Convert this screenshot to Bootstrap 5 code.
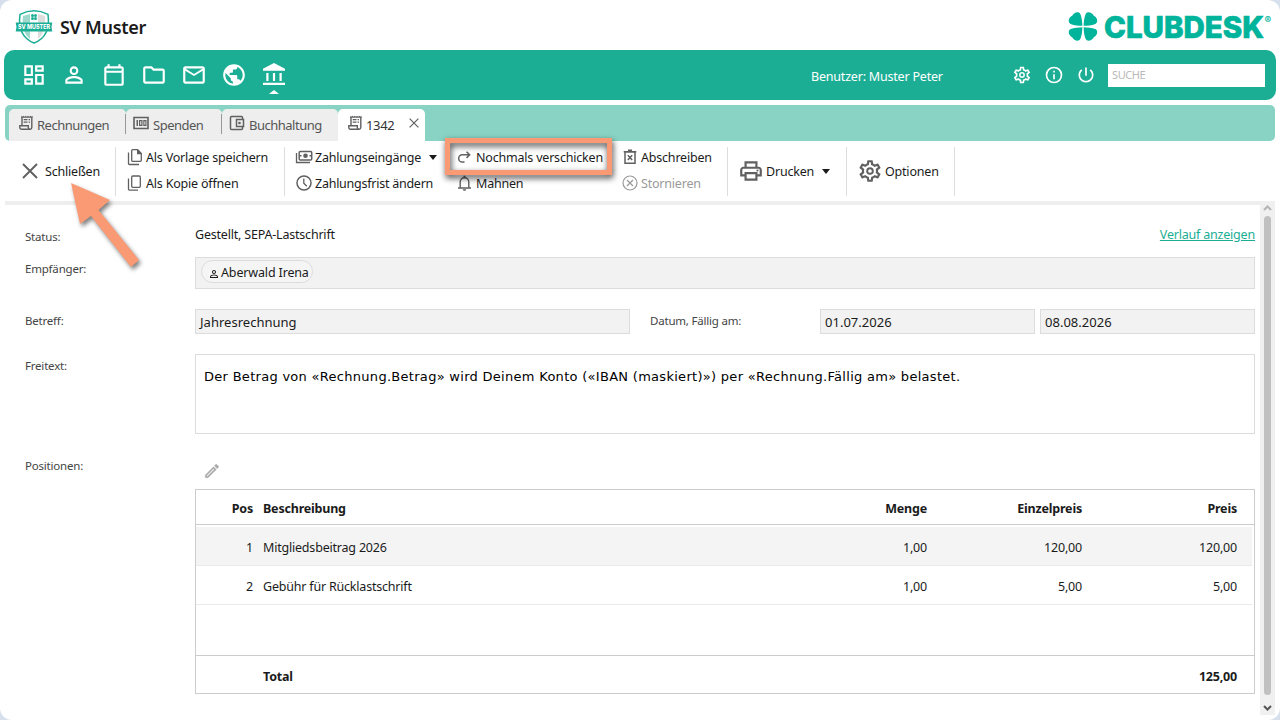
<!DOCTYPE html>
<html lang="de">
<head>
<meta charset="utf-8">
<meta name="viewport" content="width=device-width, initial-scale=1">
<title>SV Muster – Rechnung 1342</title>
<link href="https://cdn.jsdelivr.net/npm/bootstrap@5.3.0/dist/css/bootstrap.min.css" rel="stylesheet">
<style>
body{background:#d5e0ec;font-family:"Noto Sans","Open Sans",sans-serif;font-size:12.5px;letter-spacing:-.2px;color:#1b1b1b;line-height:20px;overflow:hidden}
svg{flex:none;display:block;fill:currentColor;overflow:visible}
.app{width:1280px;height:720px;background:#fff;border-radius:12px}
.brand-row{height:50px;padding:5px 6px 0 15px}
.club{font-size:18px;font-weight:600;letter-spacing:-.3px;margin:-1px 0 0 7px}
.mainbar{height:50px;margin:0 4px;background:#1cae95;border-radius:10px;color:#fff;padding:0 11px 0 17px}
.mod{width:26px;margin-right:14px}
.user{width:201px;padding-top:3px}
.find{width:157px;height:23px;font-size:11px;color:#b9b9b9;padding:0 4px;background:#fff;letter-spacing:-.4px}
.tabbar{height:36px;margin:5px 5px 0;background:#89d3c4;border-radius:5px;padding:4px 0 0 4px}
.doc-tab{height:32px;background:#eee;color:#555;border-radius:5px 5px 0 0;font-size:13px;letter-spacing:-.5px}
.doc-tab.current{background:#fff;color:#333}
.split{width:1px;height:20px;background:#999;margin-bottom:3px}
.ribbon{height:60px;margin:0 5px}
.ribbon svg,.doc-tab svg{color:#606060}
.ribbon span{padding-top:2px}
.cmd{height:26px}
.sep{width:1px;height:49px;background:#ddd;margin-top:6px}
.arrowdown{border:4px solid transparent;border-top:5px solid #1b1b1b;border-bottom:0;margin-top:1px}
.off,.ribbon .off svg{color:#999}
.pane{width:1255px;height:514px;border-top:4px solid #eee;padding:0 5px 0 20px}
.lbl{width:170px;font-size:11.5px;color:#444;flex:none}
.field{background:#f2f2f2;border:1px solid #dcdcdc;font-size:13px;padding-left:4px;height:25px;line-height:24px;letter-spacing:.02px}
.pill{height:23px;border:1px solid #dcdcdc;border-radius:12px;width:112px;padding-left:6px;margin-top:-1px;background:#f5f5f5;font-size:12.5px;letter-spacing:-.15px}
.free{height:80px;border:1px solid #dcdcdc;font-family:"DejaVu Sans",sans-serif;font-size:13px;letter-spacing:.29px;padding:12px 8px;color:#000}
.bar{width:15px;height:514px;background:#f0f0f0}
.thumb{width:7px;height:479px;background:#c0c0c0;border-radius:4px}
.grid-box{width:1060px;height:205px;border:1px solid #ccc}
.c-pos{width:57px;margin-right:10px;text-align:right}
.c-num{width:155px;text-align:right}
.item{height:39px;border-bottom:1px solid #eaeaea;margin-right:2px;padding:4px 15px 0 0}
.mark-box{left:445px;top:138px;width:167px;height:37px;border:5px solid #fa9a74;filter:drop-shadow(1px 3px 3px rgba(0,0,0,.75))}
.pointer{left:60px;top:175px;filter:drop-shadow(2px 3px 2px rgba(0,0,0,.5))}
.marker{left:265px;top:40px;width:0;border:5px solid transparent;border-bottom:4px solid #fff;border-top:0}
</style>
</head>
<body>
<svg width="0" height="0" class="position-absolute">
<symbol id="gear" viewBox="0 0 24 24"><path d="M19.43 12.98c.04-.32.07-.64.07-.98s-.03-.66-.07-.98l2.11-1.65c.19-.15.24-.42.12-.64l-2-3.46c-.09-.16-.26-.25-.44-.25-.06 0-.12.01-.17.03l-2.49 1c-.52-.4-1.08-.73-1.69-.98l-.38-2.65C14.46 2.18 14.25 2 14 2h-4c-.25 0-.46.18-.49.42l-.38 2.65c-.61.25-1.17.59-1.69.98l-2.49-1c-.06-.02-.12-.03-.18-.03-.17 0-.34.09-.43.25l-2 3.46c-.13.22-.07.49.12.64l2.11 1.65c-.04.32-.07.65-.07.98s.03.66.07.98l-2.11 1.65c-.19.15-.24.42-.12.64l2 3.46c.09.16.26.25.44.25.06 0 .12-.01.17-.03l2.49-1c.52.4 1.08.73 1.69.98l.38 2.65c.03.24.24.42.49.42h4c.25 0 .46-.18.49-.42l.38-2.65c.61-.25 1.17-.59 1.69-.98l2.49 1c.06.02.12.03.18.03.17 0 .34-.09.43-.25l2-3.46c.12-.22.07-.49-.12-.64l-2.11-1.65zm-1.98-1.71c.04.31.05.52.05.73 0 .21-.02.43-.05.73l-.14 1.13.89.7 1.08.84-.7 1.21-1.27-.51-1.04-.42-.9.68c-.43.32-.84.56-1.25.73l-1.06.43-.16 1.13-.2 1.35h-1.4l-.19-1.35-.16-1.13-1.06-.43c-.43-.18-.83-.41-1.23-.71l-.91-.7-1.06.43-1.27.51-.7-1.21 1.08-.84.89-.7-.14-1.13c-.03-.31-.05-.54-.05-.74s.02-.43.05-.73l.14-1.13-.89-.7-1.08-.84.7-1.21 1.27.51 1.04.42.9-.68c.43-.32.84-.56 1.25-.73l1.06-.43.16-1.13.2-1.35h1.39l.19 1.35.16 1.13 1.06.43c.43.18.83.41 1.23.71l.91.7 1.06-.43 1.27-.51.7 1.21-1.07.85-.89.7.14 1.13zM12 8.5a3.5 3.5 0 1 0 0 7 3.5 3.5 0 0 0 0-7zm0 5.2a1.7 1.7 0 1 1 0-3.4 1.7 1.7 0 0 1 0 3.4z"/></symbol>
<symbol id="person" viewBox="0 0 24 24"><path d="M12 5.9a2.1 2.1 0 110 4.2 2.1 2.1 0 010-4.2m0 9c2.97 0 6.1 1.46 6.1 2.1v1.1H5.9V17c0-.64 3.13-2.1 6.1-2.1M12 4C9.79 4 8 5.79 8 8s1.79 4 4 4 4-1.79 4-4-1.79-4-4-4zm0 9c-2.67 0-8 1.34-8 4v3h16v-3c0-2.66-5.33-4-8-4z"/></symbol>
<symbol id="bill" viewBox="0 0 16 16"><path d="M4 10.500V1.800M13.800 1.800v10.700a1.700 1.700 0 0 1-1.700 1.700H3.500a1.700 1.700 0 0 1-1.700-1.700v-1.800h8.500v1.800c0 1.700 1.800 1.700 1.800 1.700" fill="none" stroke="currentColor" stroke-width="1.400"/><path d="M3.300.8l1.100 1 1.100-1 1.100 1 1.150-1 1.150 1 1.150-1 1.150 1 1.100-1 1.100 1 1.100-1v2H3.300zM5.700 4h3.800v1.300H5.700zM5.700 6.500h3.800v1.300H5.700zM10.600 4h1.400v1.300h-1.400zM10.600 6.500h1.400v1.300h-1.400z"/></symbol>
<symbol id="close" viewBox="0 0 16 16"><path d="M1 1l14 14M15 1L1 15" stroke="currentColor" stroke-width="1.900" fill="none"/></symbol>
<symbol id="leaf" viewBox="-16 -16 16 16"><path d="M-.7-.7C-.8-5-1.200-9-2.700-13-4-16.200-9.500-15.500-11.300-11.300-15.500-9.500-16.200-4-13-2.700-9-1.200-5-.8-.7-.7z"/></symbol>
</svg>
<div class="app d-flex flex-column">
  <header class="brand-row d-flex align-items-center">
    <svg width="38" height="36" viewBox="0 0 38 36"><path d="M19 .8c5 0 10 1.500 14 3.500 2 15-3 24.500-14 28.700C8 28.500 3 19.300 5 4.300 9 2.300 14 .8 19 .8z" fill="#fff" stroke="#1cae95" stroke-width="1.500"/><path d="M8 6c2-.8 4.500-1.500 7-2V29C10 25 6.500 18 8 6z" fill="#9fd9ce"/><path d="M23 4c2.500.5 5 1.200 7 2 1 11.500-2 18.500-7 23z" fill="#ddd"/><g fill="#1cae95"><circle cx="17.500" cy="5.500" r="1.500"/><circle cx="20.500" cy="5.500" r="1.500"/><circle cx="17.500" cy="8.500" r="1.500"/><circle cx="20.500" cy="8.500" r="1.500"/><path d="M.7 12.500h36.600l-.8 4.500.8 4.500H.7l.8-4.500z"/></g><text x="3" y="19.200" font-family="Inter" font-weight="800" font-size="6.200" textLength="32" lengthAdjust="spacingAndGlyphs" fill="#fff" letter-spacing="0">SV MUSTER</text></svg>
    <div class="club">SV Muster</div>
    <svg class="ms-auto" width="208" height="36" viewBox="0 0 208 36" style="color:#00b39b"><g transform="translate(17 16.500)"><use href="#leaf" x="-15.200" y="-15.200" width="15.200" height="15.200"/><use href="#leaf" x="-15.200" y="-15.200" width="15.200" height="15.200" transform="rotate(90)"/><use href="#leaf" x="-15.200" y="-15.200" width="15.200" height="15.200" transform="rotate(180)"/><use href="#leaf" x="-15.200" y="-15.200" width="15.200" height="15.200" transform="rotate(270)"/></g><text x="38" y="28" font-family="Inter" font-weight="800" font-size="30" textLength="160" lengthAdjust="spacingAndGlyphs" letter-spacing="0" stroke="currentColor" stroke-width=".7">CLUBDESK</text><text x="198.500" y="14" font-family="Inter" font-weight="600" font-size="10" letter-spacing="0">®</text></svg>
  </header>
  <nav class="mainbar d-flex align-items-center position-relative">
    <svg class="mod" height="26" viewBox="0 0 24 24"><path d="M19 5v2h-4V5h4M9 5v6H5V5h4m10 8v6h-4v-6h4M9 17v2H5v-2h4M21 3h-8v6h8V3zM11 3H3v10h8V3zm10 8h-8v10h8V11zm-10 4H3v6h8v-6z"/></svg>
    <svg class="mod" height="26"><use href="#person"/></svg>
    <svg class="mod" height="26" viewBox="0 0 24 24"><path d="M19 4h-1V2h-2v2H8V2H6v2H5c-1.100 0-2 .9-2 2v14c0 1.100.9 2 2 2h14c1.100 0 2-.9 2-2V6c0-1.100-.9-2-2-2zm0 16H5V10h14v10zm0-12H5V6h14v2z"/></svg>
    <svg class="mod" height="26" viewBox="0 0 24 24"><path d="M9.170 6l2 2H20v10H4V6h5.170M10 4H4c-1.100 0-1.990.9-1.990 2L2 18c0 1.100.9 2 2 2h16c1.100 0 2-.9 2-2V8c0-1.100-.9-2-2-2h-8l-2-2z"/></svg>
    <svg class="mod" height="26" viewBox="0 0 24 24"><path d="M22 6c0-1.100-.9-2-2-2H4c-1.100 0-2 .9-2 2v12c0 1.100.9 2 2 2h16c1.100 0 2-.9 2-2V6zm-2 0l-8 5-8-5h16zm0 12H4V8l8 5 8-5v10z"/></svg>
    <svg class="mod" height="26" viewBox="0 0 24 24"><path d="M12 2C6.480 2 2 6.480 2 12s4.480 10 10 10 10-4.480 10-10S17.520 2 12 2zm-1 17.930c-3.950-.49-7-3.850-7-7.930 0-.62.08-1.210.21-1.790L9 15v1c0 1.100.9 2 2 2v1.930zm6.900-2.540c-.26-.81-1-1.390-1.900-1.390h-1v-3c0-.55-.45-1-1-1H8v-2h2c.55 0 1-.45 1-1V7h2c1.100 0 2-.9 2-2v-.41c2.930 1.190 5 4.060 5 7.410 0 2.080-.8 3.970-2.100 5.390z"/></svg>
    <svg class="mod" height="26" viewBox="0 0 26 26"><path d="M13 1l11 5.700v2H2v-2zM5.300 11h2.200v8H5.300zM11.900 11h2.200v8h-2.200zM18.500 11h2.200v8h-2.200zM2 20.800h22v2.300H2z"/></svg>
    <div class="marker position-absolute"></div>
    <div class="user ms-auto">Benutzer: Muster Peter</div>
    <svg width="20" height="20" class="me-2"><use href="#gear"/></svg>
    <svg width="20" height="20" viewBox="0 0 24 24" style="margin:0 12px 0 4px"><path d="M11 7h2v2h-2zM11 11h2v6h-2zM12 2a10 10 0 1 0 0 20 10 10 0 0 0 0-20zm0 18a8 8 0 1 1 0-16 8 8 0 0 1 0 16z"/></svg>
    <svg width="20" height="20" viewBox="0 0 24 24"><path d="M13 3h-2v10h2V3zm4.830 2.170l-1.420 1.420C17.990 7.860 19 9.810 19 12c0 3.870-3.130 7-7 7s-7-3.130-7-7c0-2.190 1.010-4.140 2.580-5.420L6.170 5.170C4.230 6.820 3 9.260 3 12c0 4.970 4.030 9 9 9s9-4.030 9-9c0-2.740-1.230-5.180-3.170-6.830z"/></svg>
    <div class="find d-flex align-items-center" style="margin-left:12px">SUCHE</div>
  </nav>
  <div class="tabbar d-flex">
    <div class="doc-tab d-flex align-items-center" style="width:117px;padding-left:9px"><svg width="16" height="16" class="mb-1"><use href="#bill"/></svg><span style="margin-left:3px">Rechnungen</span><i class="split ms-auto"></i></div>
    <div class="doc-tab d-flex align-items-center" style="width:96px;padding-left:7px"><svg width="16" height="16" class="mb-1" viewBox="0 0 16 16"><path d="M1 2.500h14v11H1z" fill="none" stroke="currentColor" stroke-width="1.600"/><path d="M3.500 5h1.500v6H3.500zM6 5h3.500v6H6zm1.200 1.200v3.600h1.100V6.200zM10.300 5h3.200v6h-3.200zm1.100 1.200v3.600h1V6.200z" fill-rule="evenodd"/></svg><span style="margin-left:4px">Spenden</span><i class="split ms-auto"></i></div>
    <div class="doc-tab d-flex align-items-center" style="width:116px;padding-left:7px"><svg width="16" height="16" class="mb-1" viewBox="0 0 16 16"><path d="M13.500 4V2.600a1 1 0 0 0-1-1h-10a1 1 0 0 0-1 1v10.800a1 1 0 0 0 1 1h10a1 1 0 0 0 1-1V12M7.500 4.500h7v7h-7z" fill="none" stroke="currentColor" stroke-width="1.500"/><circle cx="10.500" cy="8" r="1.300"/></svg><span style="margin-left:4px">Buchhaltung</span></div>
    <div class="doc-tab current d-flex align-items-center" style="width:87px;padding-left:9px"><svg width="16" height="16" class="mb-1"><use href="#bill"/></svg><span style="margin-left:3px;letter-spacing:-.35px">1342</span><svg class="ms-auto mb-1" width="10" height="10" style="margin-right:6px"><use href="#close"/></svg></div>
  </div>
  <div class="ribbon d-flex">
    <div class="d-flex align-items-center" style="width:110px;padding-left:17px"><svg width="16" height="16"><use href="#close"/></svg><span style="margin-left:7px">Schließen</span></div>
    <div class="sep"></div>
    <div style="width:168px;padding:3px 0 0 10px">
      <div class="cmd d-flex align-items-center"><svg width="18" height="18" viewBox="0 0 18 18"><path d="M6.700 1.700h5l3.600 3.800v6.800a1 1 0 0 1-1 1H6.700a1 1 0 0 1-1-1V2.700a1 1 0 0 1 1-1zM2.500 4.500v11a1 1 0 0 0 1 1H13" fill="none" stroke="currentColor" stroke-width="1.300"/><path d="M11 1.200v5h5z"/></svg><span style="margin-left:2px">Als Vorlage speichern</span></div>
      <div class="cmd d-flex align-items-center"><svg width="18" height="18" viewBox="0 0 18 18"><rect x="5.700" y="2" width="8.600" height="11.300" rx="1" fill="none" stroke="currentColor" stroke-width="1.300"/><path d="M2.500 4.500v10.700a1 1 0 0 0 1 1H12" fill="none" stroke="currentColor" stroke-width="1.300"/></svg><span style="margin-left:2px">Als Kopie öffnen</span></div>
    </div>
    <div class="sep"></div>
    <div style="width:162px;padding:3px 0 0 10px">
      <div class="cmd d-flex align-items-center"><svg width="18" height="18" viewBox="0 0 18 18"><rect x="4.200" y="3.500" width="12.500" height="8.500" rx="1" fill="none" stroke="currentColor" stroke-width="1.500"/><path d="M1.500 5v9.500H15" fill="none" stroke="currentColor" stroke-width="1.300"/><circle cx="10.500" cy="7.750" r="2.300"/><path d="M5 7h1.500v1.500H5zM14.500 7H16v1.500h-1.500z"/></svg><span style="margin-left:2px">Zahlungseingänge</span><i class="arrowdown ms-auto" style="margin-right:10px"></i></div>
      <div class="cmd d-flex align-items-center"><svg width="18" height="18" viewBox="0 0 18 18"><circle cx="9" cy="9" r="7" fill="none" stroke="currentColor" stroke-width="1.500"/><path d="M8.800 4.500V9.300l3 3" fill="none" stroke="currentColor" stroke-width="1.300"/></svg><span style="margin-left:2px;letter-spacing:-.25px">Zahlungsfrist ändern</span></div>
    </div>
    <div style="width:165px;padding:3px 0 0 8px">
      <div class="cmd d-flex align-items-center"><svg width="18" height="18" viewBox="0 0 18 18"><path d="M9.500 14H7.300a3.600 3.600 0 0 1 0-7.200H15M11.500 3.700l3.200 3.100-3.200 3.100" fill="none" stroke="currentColor" stroke-width="1.500"/></svg><span style="margin-left:3px">Nochmals verschicken</span></div>
      <div class="cmd d-flex align-items-center"><svg width="18" height="18" viewBox="0 0 18 18"><path d="M5.200 14V8a4.300 4.300 0 0 1 8.600 0v6M3 14h13" fill="none" stroke="currentColor" stroke-width="1.400"/><path d="M8.500 1.800h2v2h-2zM7.800 15.200h3.400c0 2-3.400 2-3.400 0z"/></svg><span style="margin-left:3px">Mahnen</span></div>
    </div>
    <div style="width:114px;padding:3px 0 0 9px">
      <div class="cmd d-flex align-items-center"><svg width="18" height="18" viewBox="0 0 18 18"><path d="M4 4h10v11.200H4zM2.700 3.700h12.600M7 2.200h4M6.800 7.300l4.400 4.600M11.200 7.300l-4.400 4.600" fill="none" stroke="currentColor" stroke-width="1.500"/></svg><span style="margin-left:2px">Abschreiben</span></div>
      <div class="cmd off d-flex align-items-center"><svg width="18" height="18" viewBox="0 0 18 18"><circle cx="9" cy="9" r="7" fill="none" stroke="currentColor" stroke-width="1.200"/><path d="M6 6l6 6M12 6l-6 6" stroke="currentColor" stroke-width="1.200"/></svg><span style="margin-left:2px">Stornieren</span></div>
    </div>
    <div class="sep" style="margin-left:1px"></div>
    <div class="d-flex align-items-center" style="width:118px;padding-left:10px"><svg width="26" height="26" viewBox="0 0 24 24"><path d="M19 8h-1V3H6v5H5c-1.660 0-3 1.340-3 3v6h4v4h12v-4h4v-6c0-1.660-1.340-3-3-3zM8 5h8v3H8V5zm8 12v2H8v-4h8v2zm2-2v-2H6v2H4v-4c0-.55.45-1 1-1h14c.55 0 1 .45 1 1v4h-2z"/><circle cx="18" cy="11.500" r="1"/></svg><span style="margin-left:2px">Drucken</span><i class="arrowdown ms-auto" style="margin-right:16px"></i></div>
    <div class="sep"></div>
    <div class="d-flex align-items-center" style="width:107px;padding-left:10px"><svg width="26" height="26"><use href="#gear"/></svg><span style="margin-left:2px">Optionen</span></div>
    <div class="sep"></div>
  </div>
  <div class="d-flex" style="margin-left:5px">
    <main class="pane">
      <div class="d-flex" style="height:52px;padding-top:20px"><div class="lbl" style="padding-top:2px">Status:</div><div>Gestellt, SEPA-Lastschrift</div><a href="#" class="ms-auto" style="color:#1cae95">Verlauf anzeigen</a></div>
      <div class="d-flex" style="height:52px"><div class="lbl" style="padding-top:2px">Empfänger:</div><div class="field flex-grow-1" style="height:32px;padding:3px 5px"><div class="pill d-flex align-items-center"><svg width="12" height="12" class="mt-1"><use href="#person"/></svg><span style="margin-left:1px;padding-top:2px">Aberwald Irena</span></div></div></div>
      <div class="d-flex" style="height:45px"><div class="lbl" style="padding-top:2px">Betreff:</div><div class="field" style="width:435px">Jahresrechnung</div><div class="lbl" style="margin-left:20px;padding-top:2px">Datum, Fällig am:</div><div class="field" style="width:215px">01.07.2026</div><div class="field flex-grow-1" style="margin-left:5px">08.08.2026</div></div>
      <div class="d-flex" style="height:100px"><div class="lbl" style="padding-top:2px">Freitext:</div><div class="free flex-grow-1">Der Betrag von «Rechnung.Betrag» wird Deinem Konto («IBAN (maskiert)») per «Rechnung.Fällig am» belastet.</div></div>
      <div class="d-flex"><div class="lbl" style="padding-top:2px">Positionen:</div>
        <div>
          <div style="height:35px;padding:8px 0 0 8px;color:#aaa"><svg width="18" height="18" viewBox="0 0 24 24"><path stroke="currentColor" stroke-width=".4" d="M14.060 9.020l.92.92L5.920 19H5v-.92l9.060-9.060M17.660 3c-.25 0-.51.1-.7.29l-1.830 1.830 3.750 3.750 1.830-1.830c.39-.39.39-1.020 0-1.410l-2.340-2.340c-.2-.2-.45-.29-.71-.29zm-3.600 3.190L3 17.250V21h3.750L17.810 9.940l-3.750-3.750z"/></svg></div>
          <div class="grid-box">
            <div class="d-flex align-items-center fw-bold" style="height:35px;border-bottom:1px solid #ccc;padding:3px 17px 0 0"><div class="c-pos">Pos</div><div class="flex-grow-1">Beschreibung</div><div class="c-num">Menge</div><div class="c-num">Einzelpreis</div><div class="c-num">Preis</div></div>
            <div class="item d-flex align-items-center" style="background:#f4f4f4;margin-top:2px"><div class="c-pos">1</div><div class="flex-grow-1">Mitgliedsbeitrag 2026</div><div class="c-num">1,00</div><div class="c-num">120,00</div><div class="c-num">120,00</div></div>
            <div class="item d-flex align-items-center"><div class="c-pos">2</div><div class="flex-grow-1">Gebühr für Rücklastschrift</div><div class="c-num">1,00</div><div class="c-num">5,00</div><div class="c-num">5,00</div></div>
            <div class="d-flex align-items-center fw-bold" style="margin-top:50px;height:38px;border-top:1px solid #ccc;padding:5px 17px 0 67px"><span>Total</span><span class="ms-auto">125,00</span></div>
          </div>
        </div>
      </div>
    </main>
    <div class="bar d-flex flex-column align-items-center"><svg width="15" height="15" viewBox="0 0 15 15"><path d="M4 9l3.500-3.500L11 9" fill="none" stroke="#b5b5b5" stroke-width="2"/></svg><div class="thumb"></div><svg width="15" height="20" viewBox="0 0 15 20"><path d="M4 11l3.500 3.500L11 11" fill="none" stroke="#555" stroke-width="2"/></svg></div>
  </div>
</div>
<div class="mark-box position-absolute"></div>
<svg class="pointer position-absolute" width="90" height="100" viewBox="60 175 90 100" fill="none"><path d="M71 183L110 200 98.500 210 139 260 131 267 91 216 80 224z" fill="#fa9a74"/></svg>
<script src="https://cdn.jsdelivr.net/npm/bootstrap@5.3.0/dist/js/bootstrap.bundle.min.js"></script>
</body>
</html>
